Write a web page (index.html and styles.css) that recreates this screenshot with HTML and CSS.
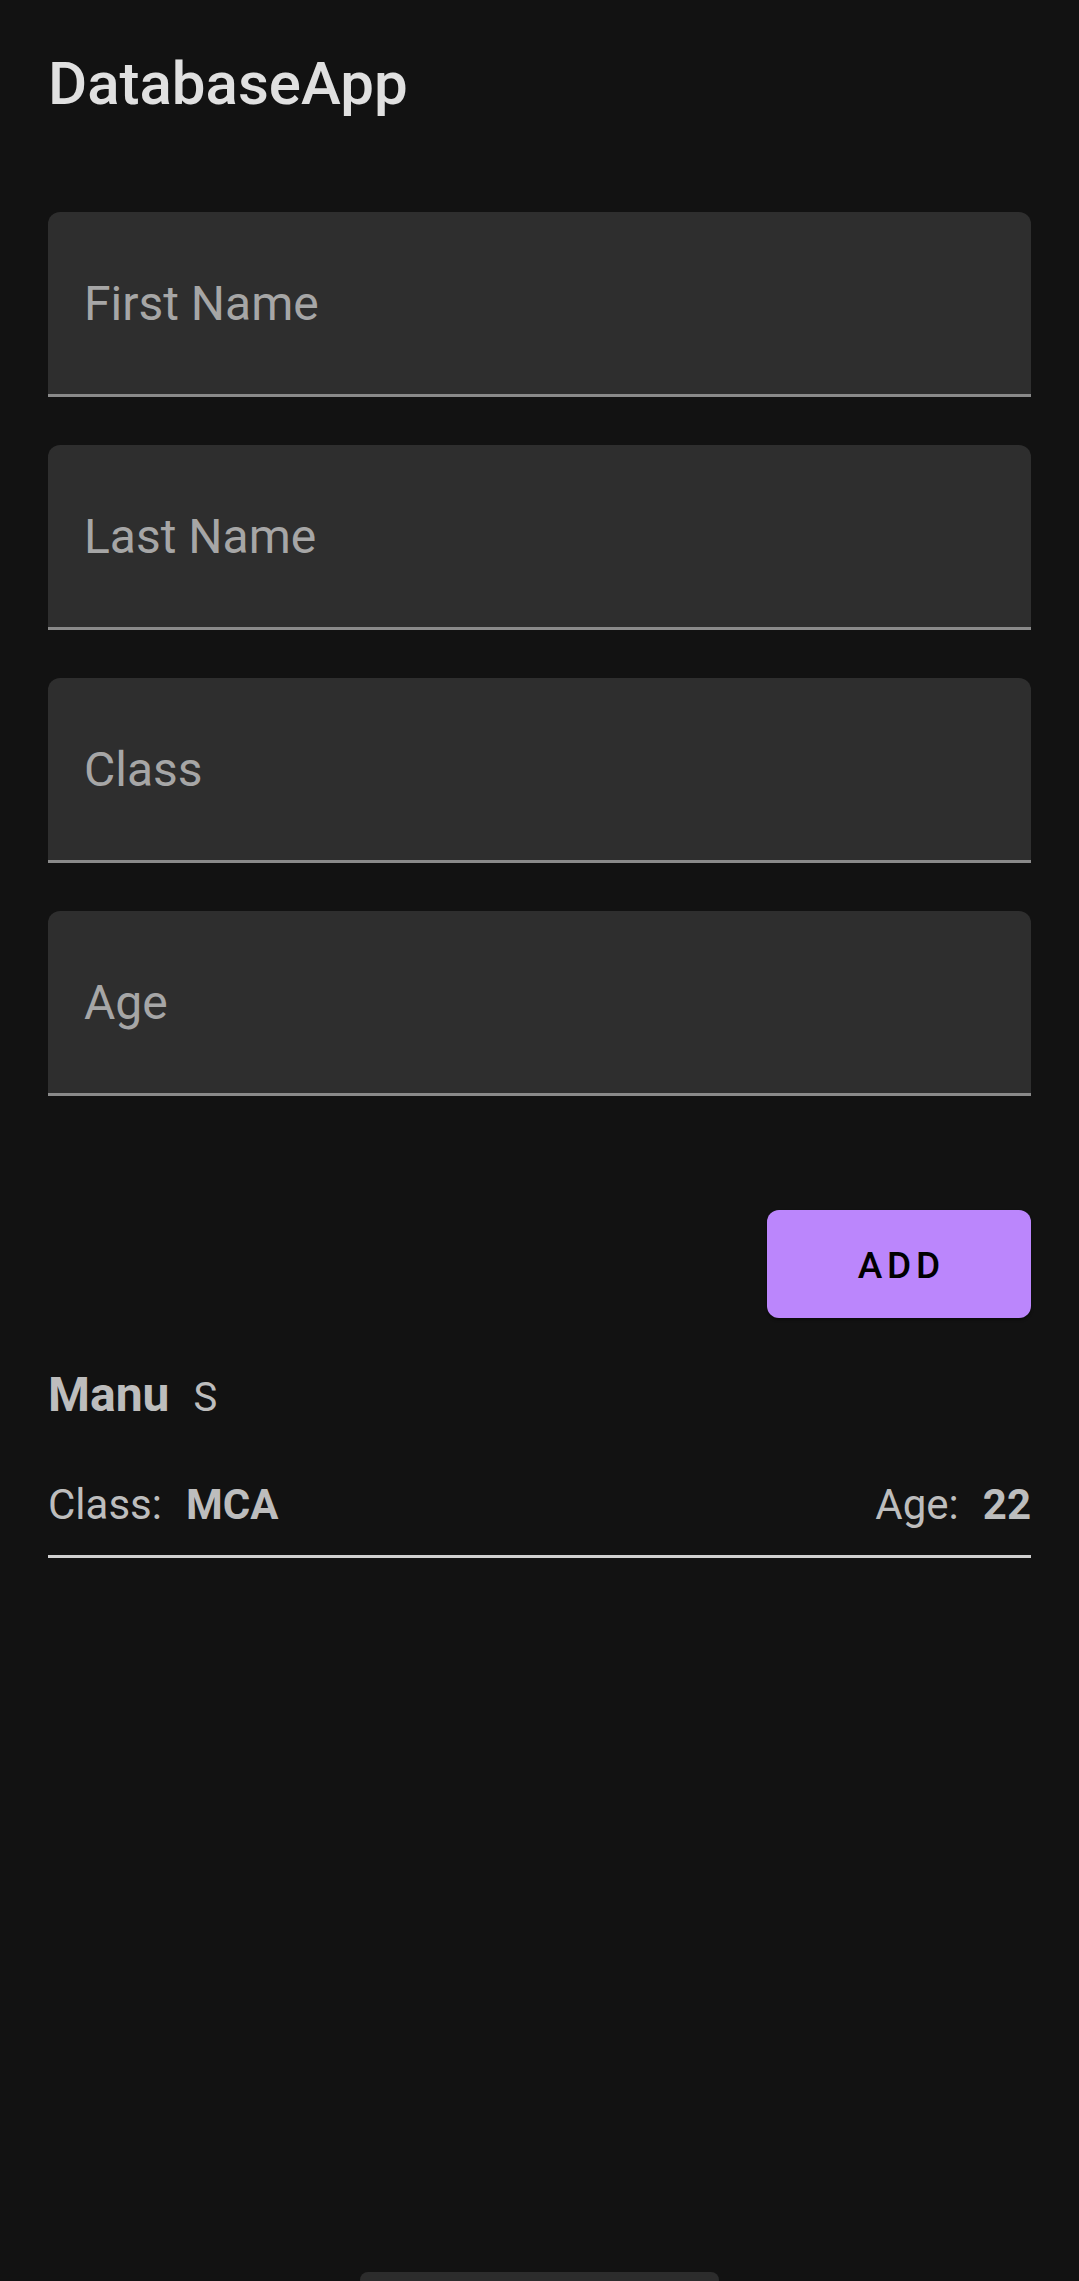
FILE: index.html
```html
<!DOCTYPE html>
<html lang="en">
<head>
<meta charset="utf-8">
<title>DatabaseApp</title>
<link rel="stylesheet" href="styles.css">
</head>
<body>
<div class="screen">
  <header class="appbar">
    <h1 class="title">DatabaseApp</h1>
  </header>
  <main class="content">
    <form class="form">
      <div class="field"><span class="label">First Name</span></div>
      <div class="field"><span class="label">Last Name</span></div>
      <div class="field"><span class="label">Class</span></div>
      <div class="field"><span class="label">Age</span></div>
    </form>
    <div class="actions">
      <button class="add-btn" type="button">ADD</button>
    </div>
    <ul class="list">
      <li class="item">
        <div class="name-row">
          <span class="first">Manu</span>
          <span class="last">S</span>
        </div>
        <div class="info-row">
          <div class="pair"><span class="key">Class:</span><span class="val">MCA</span></div>
          <div class="pair"><span class="key">Age:</span><span class="val">22</span></div>
        </div>
      </li>
    </ul>
  </main>
  <div class="nav-handle"></div>
</div>
</body>
</html>
```

FILE: styles.css
```css
* { box-sizing: border-box; }
html, body {
  margin: 0;
  padding: 0;
  background: #121212;
}
body {
  font-family: Roboto, "Noto Sans", "Liberation Sans", sans-serif;
  color: #bdbdbd;
  width: 1079px;
  height: 2281px;
  overflow: hidden;
}
.screen {
  padding: 0 48px;
}
.appbar {
  padding-top: 48px;
}
.title {
  margin: 0;
  font-size: 60px;
  line-height: 72px;
  font-weight: 500;
  color: #e0e0e0;
}
.content {
  padding-top: 92px;
}
.form {
  display: flex;
  flex-direction: column;
  gap: 48px;
  margin: 0;
}
.field {
  height: 185px;
  background: #2e2e2e;
  border-radius: 12px 12px 0 0;
  border-bottom: 3px solid #8a8a8a;
  display: flex;
  align-items: center;
  padding-left: 36px;
  padding-top: 2px;
}
.label {
  font-size: 48px;
  color: #a6a6a6;
  line-height: 56px;
}
.actions {
  display: flex;
  justify-content: flex-end;
  margin-top: 114px;
}
.add-btn {
  width: 264px;
  height: 108px;
  border: none;
  border-radius: 12px;
  background: #bb86fc;
  color: #000;
  font-family: Roboto, "Noto Sans", sans-serif;
  font-weight: 500;
  font-size: 37px;
  letter-spacing: 4.8px;
  padding: 2px 0 0 4.8px;
  display: flex;
  align-items: center;
  justify-content: center;
  box-shadow: 0 2px 3px rgba(0,0,0,0.4);
}
.list {
  list-style: none;
  margin: 49px 0 0;
  padding: 0;
}
.item {
  border-bottom: 3px solid #d0d0d0;
  padding-bottom: 25px;
}
.name-row {
  display: flex;
  align-items: baseline;
  gap: 24px;
  line-height: 56px;
}
.first {
  font-size: 48px;
  font-weight: 700;
}
.last {
  font-size: 40px;
  font-weight: 400;
}
.info-row {
  display: flex;
  justify-content: space-between;
  align-items: baseline;
  margin-top: 54px;
  line-height: 50px;
  font-size: 42px;
}
.pair {
  display: flex;
  align-items: baseline;
  gap: 24px;
}
.key { font-weight: 400; }
.val { font-weight: 700; }
.nav-handle {
  position: fixed;
  left: 360px;
  bottom: -7px;
  width: 359px;
  height: 16px;
  border-radius: 8px;
  background: #2c2c2c;
}
```
